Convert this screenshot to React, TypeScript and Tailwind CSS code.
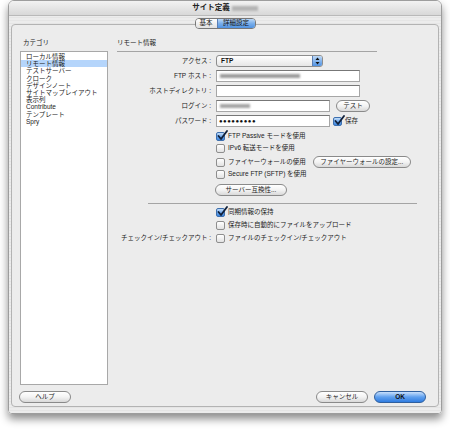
import React from 'react';

const font = "font-['Liberation_Sans','Noto_Sans_CJK_JP',sans-serif]";

const Check: React.FC<{ checked?: boolean }> = ({ checked }) =>
  checked ? (
    <span className="relative inline-block w-[9px] h-[9px] shrink-0 rounded-[2px] border border-[#3d6fae] bg-gradient-to-b from-[#c4def8] via-[#6fa8ec] to-[#3a85de]">
      <svg className="absolute -top-[3px] left-[0px]" width="11" height="11" viewBox="0 0 11 11">
        <path d="M1.5 6 L4 9 L10 1" fill="none" stroke="#10203a" strokeWidth="1.8" strokeLinecap="round" strokeLinejoin="round" />
      </svg>
    </span>
  ) : (
    <span className="inline-block w-[9px] h-[9px] shrink-0 rounded-[2px] border border-[#8e8e8e] bg-gradient-to-b from-white to-[#e2e2e2]" />
  );

const Pill: React.FC<{ children: React.ReactNode; className?: string }> = ({ children, className = '' }) => (
  <span
    className={`inline-flex h-[12px] items-center justify-center rounded-full border border-[#8a8a8a] bg-gradient-to-b from-white via-[#f3f3f3] to-[#d9d9d9] text-[6.5px] leading-none text-[#222] ${className}`}
  >
    {children}
  </span>
);

const Field: React.FC<{ w: string; children?: React.ReactNode }> = ({ w, children }) => (
  <span className={`flex h-[12px] ${w} items-center border border-[#a6a6a6] border-t-[#777] bg-white px-[2px]`}>{children}</span>
);

const Row: React.FC<{ label?: string; children: React.ReactNode; className?: string }> = ({ label, children, className = '' }) => (
  <div className={`flex items-center ${className}`}>
    <span className="w-[96px] shrink-0 pr-[2px] text-right text-[6.5px] leading-none text-[#222]">{label ? `${label} :` : ''}</span>
    <div className="ml-[3px] flex items-center gap-[3px]">{children}</div>
  </div>
);

const CheckRow: React.FC<{ label?: string; text: string; checked?: boolean; children?: React.ReactNode; className?: string }> = ({
  label,
  text,
  checked,
  children,
  className = 'h-[12px]',
}) => (
  <Row label={label} className={className}>
    <Check checked={checked} />
    <span className="text-[6.5px] leading-none text-[#222]">{text}</span>
    {children}
  </Row>
);

const categories = [
  'ローカル情報',
  'リモート情報',
  'テストサーバー',
  'クローク',
  'デザインノート',
  'サイトマップレイアウト',
  '表示列',
  'Contribute',
  'テンプレート',
  'Spry',
];

export default function App() {
  return (
    <div className={`w-[450px] h-[429px] bg-white px-[8px] ${font}`}>
      <div className="flex h-[414px] w-[434px] flex-col overflow-hidden rounded-t-[6px] rounded-b-[4px] border border-[#9d9d9d] shadow-[0_5px_9px_rgba(0,0,0,0.45)]">
        <div className="flex h-[15px] shrink-0 items-center justify-center gap-[2px] border-b border-[#b9b9b9] bg-gradient-to-b from-[#f2f2f2] to-[#d8d8d8]">
          <span className="text-[7.5px] font-bold leading-none text-[#222]">サイト定義</span>
          <span className="h-[5px] w-[26px] bg-[#b4b4b4] blur-[1px]" />
        </div>
        <div className="flex flex-1 flex-col bg-[repeating-linear-gradient(0deg,#ececec_0px,#ececec_2px,#e5e5e5_2px,#e5e5e5_3px)] px-[2px] pb-[6px]">
          <div className="relative z-10 mt-[2px] flex justify-center">
            <div className="flex h-[11px] overflow-hidden rounded-[4px] border border-[#777] text-[6.5px] leading-none">
              <span className="flex w-[21px] items-center justify-center bg-gradient-to-b from-white to-[#e0e0e0] text-[#222]">基本</span>
              <span className="flex w-[38px] items-center justify-center border-l border-[#5a7fb5] bg-gradient-to-b from-[#bcd8f6] via-[#79aeea] to-[#4f92e2] text-[#111]">詳細設定</span>
            </div>
          </div>
          <div className="-mt-[5px] flex flex-1 flex-col rounded-[4px] border border-[#b3b3b3] bg-[#ececec] pl-[8px] pr-[12px] pt-[14px] pb-[3px]">
            <div className="flex flex-1">
              <div className="flex w-[88px] shrink-0 flex-col">
                <span className="h-[8px] pl-[3px] text-[6.5px] leading-[8px] text-[#222]">カテゴリ</span>
                <div className="mt-[4px] flex flex-1 flex-col border border-[#a8a8a8] bg-white pt-[1px]">
                  {categories.map((c, i) => (
                    <span
                      key={c}
                      className={`h-[7.2px] pl-[5px] text-[6.5px] leading-[7.2px] text-[#222] ${i === 1 ? 'bg-[#b5d5fb]' : ''}`}
                    >
                      {c}
                    </span>
                  ))}
                </div>
              </div>
              <div className="ml-[9px] flex flex-1 flex-col">
                <span className="h-[8px] text-[6.5px] leading-[8px] text-[#222]">リモート情報</span>
                <div className="mt-[4px] w-[260px] border-t border-[#a4a4a4]" />
                <div className="mt-[3px] flex flex-col gap-[3px]">
                  <Row label="アクセス" className="h-[12px]">
                    <span className="flex h-[12px] w-[107px] items-center overflow-hidden rounded-[3px] border border-[#8d8d8d] bg-gradient-to-b from-white to-[#e6e6e6]">
                      <span className="flex-1 pl-[4px] text-[6.5px] font-bold leading-none text-[#111]">FTP</span>
                      <span className="flex h-full w-[10px] items-center justify-center border-l border-[#5a7fb5] bg-gradient-to-b from-[#bcd8f6] to-[#4f92e2]">
                        <svg width="5" height="8" viewBox="0 0 5 8">
                          <path d="M2.5 0.5 L4.5 3 H0.5 Z M2.5 7.5 L4.5 5 H0.5 Z" fill="#111" />
                        </svg>
                      </span>
                    </span>
                  </Row>
                  <Row label="FTP ホスト" className="h-[12px]">
                    <Field w="w-[144px]">
                      <span className="ml-[1px] h-[4px] w-[80px] bg-[#9a9a9a] blur-[1px]" />
                    </Field>
                  </Row>
                  <Row label="ホストディレクトリ" className="h-[12px]">
                    <Field w="w-[144px]" />
                  </Row>
                  <Row label="ログイン" className="h-[12px]">
                    <Field w="w-[114px]">
                      <span className="ml-[1px] h-[4px] w-[30px] bg-[#a4a4a4] blur-[1px]" />
                    </Field>
                    <Pill className="ml-[3px] w-[34px]">テスト</Pill>
                  </Row>
                  <Row label="パスワード" className="h-[12px]">
                    <Field w="w-[114px]">
                      <span className="text-[6px] leading-none tracking-[0.5px] text-[#111]">●●●●●●●●●</span>
                    </Field>
                    <Check checked />
                    <span className="text-[6.5px] leading-none text-[#222]">保存</span>
                  </Row>
                </div>
                <div className="mt-[3px] flex flex-col">
                  <CheckRow text="FTP Passive モードを使用" checked />
                  <CheckRow text="IPv6 転送モードを使用" />
                  <div className="h-[2px]" />
                  <CheckRow text="ファイヤーウォールの使用">
                    <Pill className="ml-[4px] w-[98px]">ファイヤーウォールの設定...</Pill>
                  </CheckRow>
                  <CheckRow text="Secure FTP (SFTP) を使用" />
                  <Row className="mt-[4px] h-[12px]">
                    <Pill className="-ml-[1px] w-[72px]">サーバー互換性...</Pill>
                  </Row>
                </div>
                <div className="mt-[7px] ml-[31px] w-[269px] border-t border-[#a4a4a4]" />
                <div className="mt-[2px] flex flex-col gap-[1px]">
                  <CheckRow text="同期情報の保持" checked />
                  <CheckRow text="保存時に自動的にファイルをアップロード" />
                  <CheckRow label="チェックイン/チェックアウト" text="ファイルのチェックイン/チェックアウト" />
                </div>
              </div>
            </div>
            <div className="mt-[6px] flex items-center">
              <Pill className="-ml-[1px] w-[52px]">ヘルプ</Pill>
              <div className="flex-1" />
              <Pill className="w-[52px]">キャンセル</Pill>
              <span className="ml-[6px] inline-flex h-[12px] w-[52px] items-center justify-center rounded-full border border-[#2f5f9e] bg-gradient-to-b from-[#c9e0fb] via-[#5fa0ee] to-[#2f7ce0] text-[6.5px] font-bold leading-none text-[#111]">
                OK
              </span>
            </div>
          </div>
        </div>
      </div>
    </div>
  );
}
